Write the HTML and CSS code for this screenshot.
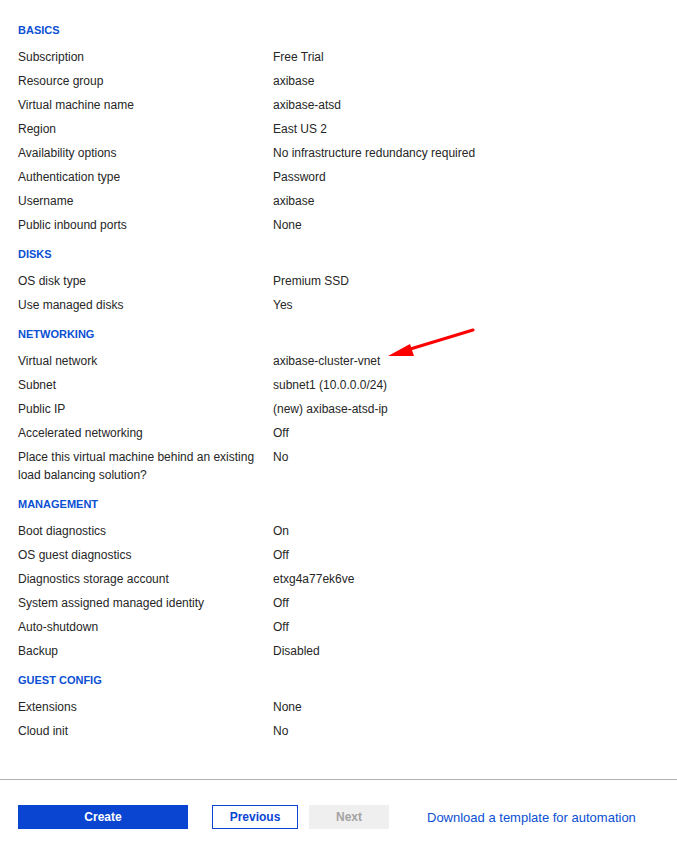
FILE: index.html
```html
<!DOCTYPE html>
<html lang="en">
<head>
    <meta charset="UTF-8">
    <title>Create a virtual machine - Review</title>
    <link rel="stylesheet" href="styles.css">
</head>
<body>
    <div class="summary">
        <h3 class="section">Basics</h3>
        <div class="row"><span class="label">Subscription</span><span class="value">Free Trial</span></div>
        <div class="row"><span class="label">Resource group</span><span class="value">axibase</span></div>
        <div class="row"><span class="label">Virtual machine name</span><span class="value">axibase-atsd</span></div>
        <div class="row"><span class="label">Region</span><span class="value">East US 2</span></div>
        <div class="row"><span class="label">Availability options</span><span class="value">No infrastructure redundancy required</span></div>
        <div class="row"><span class="label">Authentication type</span><span class="value">Password</span></div>
        <div class="row"><span class="label">Username</span><span class="value">axibase</span></div>
        <div class="row"><span class="label">Public inbound ports</span><span class="value">None</span></div>

        <h3 class="section">Disks</h3>
        <div class="row"><span class="label">OS disk type</span><span class="value">Premium SSD</span></div>
        <div class="row"><span class="label">Use managed disks</span><span class="value">Yes</span></div>

        <h3 class="section">Networking</h3>
        <div class="row"><span class="label">Virtual network</span><span class="value">axibase-cluster-vnet</span></div>
        <div class="row"><span class="label">Subnet</span><span class="value">subnet1 (10.0.0.0/24)</span></div>
        <div class="row"><span class="label">Public IP</span><span class="value">(new) axibase-atsd-ip</span></div>
        <div class="row"><span class="label">Accelerated networking</span><span class="value">Off</span></div>
        <div class="row"><span class="label">Place this virtual machine behind an existing load balancing solution?</span><span class="value">No</span></div>

        <h3 class="section">Management</h3>
        <div class="row"><span class="label">Boot diagnostics</span><span class="value">On</span></div>
        <div class="row"><span class="label">OS guest diagnostics</span><span class="value">Off</span></div>
        <div class="row"><span class="label">Diagnostics storage account</span><span class="value">etxg4a77ek6ve</span></div>
        <div class="row"><span class="label">System assigned managed identity</span><span class="value">Off</span></div>
        <div class="row"><span class="label">Auto-shutdown</span><span class="value">Off</span></div>
        <div class="row"><span class="label">Backup</span><span class="value">Disabled</span></div>

        <h3 class="section">Guest config</h3>
        <div class="row"><span class="label">Extensions</span><span class="value">None</span></div>
        <div class="row"><span class="label">Cloud init</span><span class="value">No</span></div>

        <!-- annotation arrow pointing at the virtual network -->
        <svg class="arrow" width="100" height="40" viewBox="0 0 100 40">
            <line x1="90" y1="7" x2="24" y2="27" stroke="#ff0000" stroke-width="3" stroke-linecap="round"/>
            <polygon points="5,33 27,21 31,33" fill="#ff0000"/>
        </svg>
    </div>

    <div class="footer">
        <button class="btn btn-primary">Create</button>
        <button class="btn btn-outline">Previous</button>
        <button class="btn btn-disabled" disabled>Next</button>
        <a class="template-link" href="#">Download a template for automation</a>
    </div>
</body>
</html>
```

FILE: styles.css
```css
body {
    margin: 0;
    font-family: "Liberation Sans", Arial, sans-serif;
    font-size: 12px;
    color: #262626;
    background-color: white;
}

.summary {
    position: relative;
    padding: 13px 18px 36px;
    border-bottom: 1px solid #b3b3b3;
}

.section {
    margin: 8px 0 6px;
    font-size: 11px;
    line-height: 18px;
    font-weight: bold;
    text-transform: uppercase;
    color: #0b4fd3;
}

.row {
    display: grid;
    grid-template-columns: 240px 1fr;
    column-gap: 15px;
    padding: 3px 0;
    line-height: 18px;
}

.arrow {
    position: absolute;
    left: 383px;
    top: 323px;
}

.footer {
    display: flex;
    align-items: center;
    padding: 25px 18px 19px;
}

.btn {
    height: 24px;
    font-family: "Liberation Sans", Arial, sans-serif;
    font-size: 12px;
    font-weight: bold;
    border: 1px solid transparent;
    padding: 0;
    cursor: pointer;
}

.btn-primary {
    width: 170px;
    background-color: #0a45d2;
    color: white;
    margin-right: 24px;
}

.btn-outline {
    width: 86px;
    background-color: white;
    border-color: #0a45d2;
    color: #0a45d2;
    margin-right: 11px;
}

.btn-disabled {
    width: 80px;
    background-color: #efefef;
    color: #a3a3a3;
    margin-right: 38px;
}

.template-link {
    font-size: 13px;
    color: #0b4fd3;
    text-decoration: none;
}
```
